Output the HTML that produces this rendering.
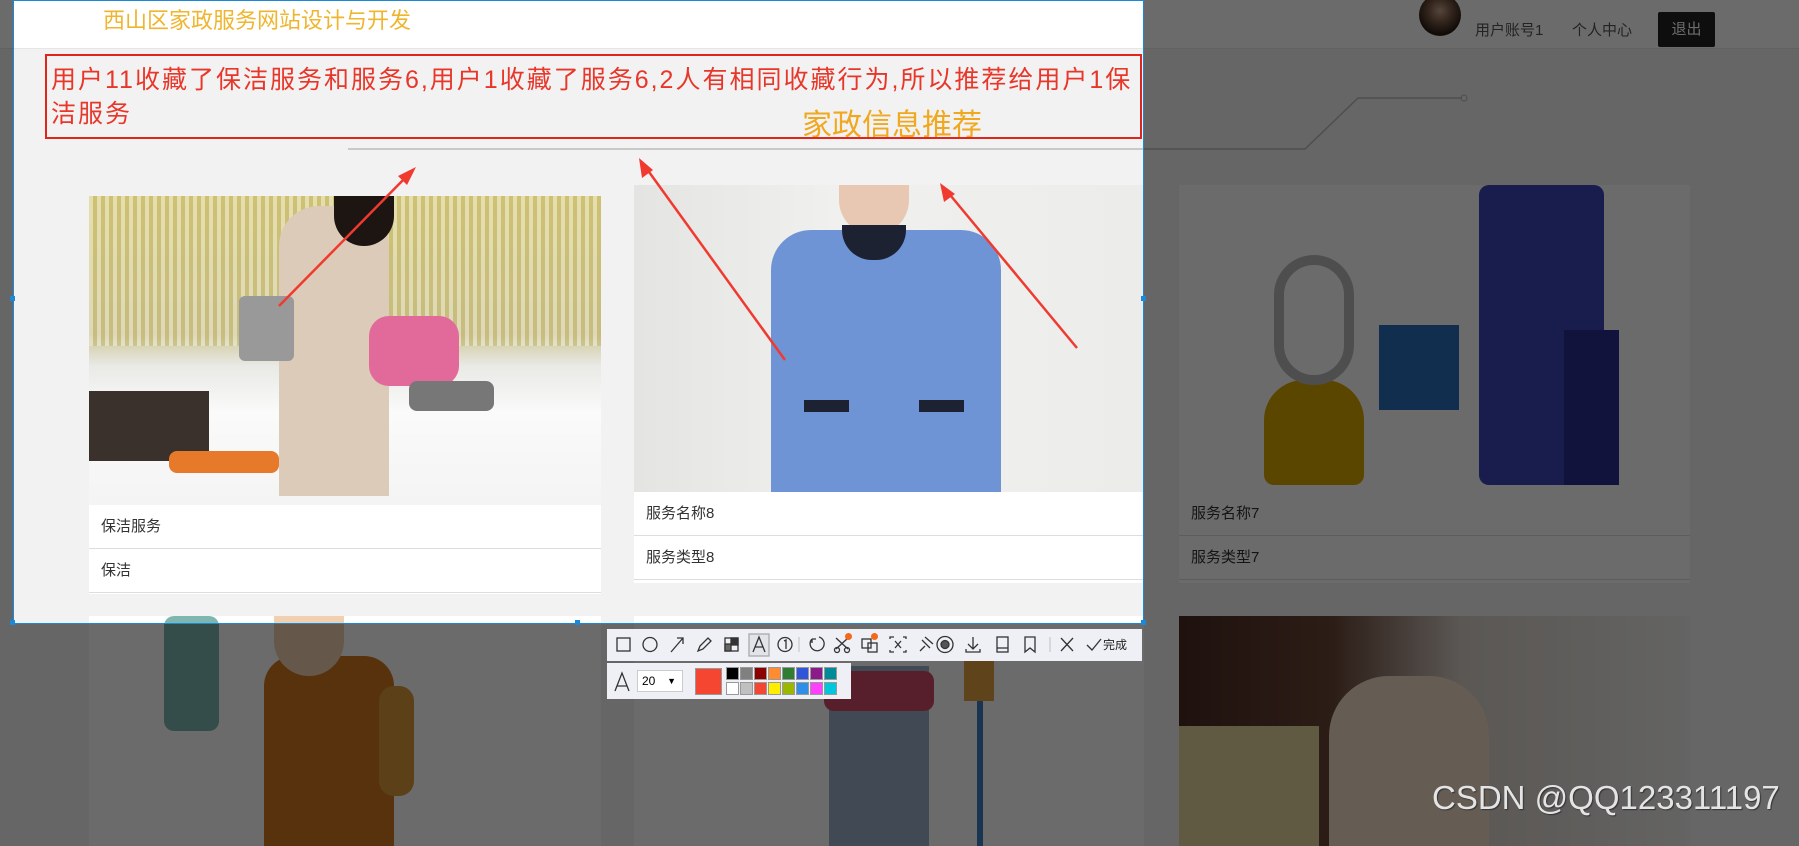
<!DOCTYPE html>
<html><head><meta charset="utf-8"><style>
*{margin:0;padding:0;box-sizing:border-box}
body{width:1799px;height:833px;overflow:hidden;background:#f2f2f2;font-family:"Liberation Sans","Noto Sans CJK SC",sans-serif;position:relative}
.abs{position:absolute}
.hdr{left:0;top:0;width:1799px;height:49px;background:#fff;border-bottom:1px solid #e6e6e6}
.card{position:absolute;background:#fff;overflow:hidden}
.row{height:44px;line-height:43px;padding-left:12px;font-size:15px;color:#333;border-bottom:1px solid #ddd;background:#fff}
.tb{position:absolute;background:#eef0f5;z-index:20}
.sw{position:absolute;width:13px;height:13px;border:1px solid #999}
</style></head><body>
<div class="abs hdr"></div>
<div class="abs" style="left:103px;top:3px;font-size:22px;color:#f0b52e">西山区家政服务网站设计与开发</div>
<div class="abs" style="left:1419px;top:-6px;width:42px;height:42px;border-radius:50%;background:radial-gradient(circle at 50% 40%,#c9a68c 0,#7a5a45 35%,#2b1d16 70%)"></div>
<div class="abs" style="left:1475px;top:19px;font-size:15px;color:#555">用户账号1</div>
<div class="abs" style="left:1572px;top:19px;font-size:15px;color:#555">个人中心</div>
<div class="abs" style="left:1658px;top:12px;width:57px;height:35px;background:#222;color:#fff;font-size:15px;line-height:35px;text-align:center;border-radius:2px">退出</div>
<svg class="abs" style="left:0;top:0" width="1799" height="833">
<polyline points="348,149 1305,149 1358,98 1462,98" fill="none" stroke="#bbb" stroke-width="1.5"/>
<circle cx="1464" cy="98" r="3" fill="none" stroke="#bbb"/>
</svg>
<div class="abs" style="left:802px;top:100px;font-size:30px;color:#f0a81e">家政信息推荐</div>
<div class="card" style="left:89px;top:196px;width:512px;height:398px">
 <div style="height:309px;position:relative;background:linear-gradient(#d9cf8a 0,#cfc99a 45%,#e9e9e6 55%,#fafafa 70%,#f4f4f4 100%)">
  <div class="abs" style="left:0;top:0;width:512px;height:150px;background:repeating-linear-gradient(90deg,rgba(255,255,255,.3) 0 4px,rgba(180,160,60,.3) 4px 8px)"></div>
  <div class="abs" style="left:0;top:195px;width:120px;height:70px;background:#3a302c"></div>
  <div class="abs" style="left:190px;top:10px;width:110px;height:290px;background:#dccbb8;border-radius:40px 40px 0 0"></div>
  <div class="abs" style="left:245px;top:0;width:60px;height:50px;background:#1c1512;border-radius:0 0 30px 30px"></div>
  <div class="abs" style="left:280px;top:120px;width:90px;height:70px;background:#e26a9a;border-radius:20px"></div>
  <div class="abs" style="left:320px;top:185px;width:85px;height:30px;background:#777;border-radius:8px"></div>
  <div class="abs" style="left:80px;top:255px;width:110px;height:22px;background:#e77a2a;border-radius:8px"></div>
  <div class="abs" style="left:150px;top:100px;width:55px;height:65px;background:#999;border-radius:6px"></div>
 </div>
 <div class="row">保洁服务</div><div class="row">保洁</div>
</div>
<div class="card" style="left:634px;top:185px;width:510px;height:398px">
 <div style="height:307px;position:relative;background:linear-gradient(90deg,#e4e4e2,#f0f0ee 40%,#ececea)">
  <div class="abs" style="left:137px;top:45px;width:230px;height:262px;background:#6f94d6;border-radius:40px 40px 0 0"></div>
  <div class="abs" style="left:205px;top:0;width:70px;height:50px;background:#e8c8b2;border-radius:0 0 35px 35px"></div>
  <div class="abs" style="left:208px;top:40px;width:64px;height:35px;background:#1d2233;border-radius:0 0 30px 30px"></div>
  <div class="abs" style="left:170px;top:215px;width:45px;height:12px;background:#1d2233"></div>
  <div class="abs" style="left:285px;top:215px;width:45px;height:12px;background:#1d2233"></div>
 </div>
 <div class="row">服务名称8</div><div class="row">服务类型8</div>
</div>
<div class="card" style="left:1179px;top:185px;width:511px;height:398px">
 <div style="height:307px;position:relative;background:#fff">
  <div class="abs" style="left:85px;top:195px;width:100px;height:105px;background:#d9a800;border-radius:40px 40px 10px 10px"></div>
  <div class="abs" style="left:95px;top:70px;width:80px;height:130px;border:10px solid #bbb;border-radius:40px"></div>
  <div class="abs" style="left:200px;top:140px;width:80px;height:85px;background:#2c6fba"></div>
  <div class="abs" style="left:300px;top:0;width:125px;height:300px;background:#3a45b8;border-radius:10px"></div>
  <div class="abs" style="left:385px;top:145px;width:55px;height:155px;background:#2a2f90"></div>
 </div>
 <div class="row">服务名称7</div><div class="row">服务类型7</div>
</div>
<div class="card" style="left:89px;top:616px;width:512px;height:230px">
 <div class="abs" style="left:175px;top:40px;width:130px;height:200px;background:#d2781e;border-radius:30px 30px 0 0"></div>
 <div class="abs" style="left:75px;top:0;width:55px;height:115px;background:#7fb7b0;border-radius:10px"></div>
 <div class="abs" style="left:185px;top:0;width:70px;height:60px;background:#f1d0b0;border-radius:0 0 35px 35px"></div>
 <div class="abs" style="left:290px;top:70px;width:35px;height:110px;background:#d99a3a;border-radius:15px"></div>
</div>
<div class="card" style="left:634px;top:616px;width:510px;height:230px">
 <div class="abs" style="left:195px;top:50px;width:100px;height:180px;background:#9bb0c8"></div>
 <div class="abs" style="left:190px;top:55px;width:110px;height:40px;background:#d04a6a;border-radius:10px"></div>
 <div class="abs" style="left:343px;top:50px;width:6px;height:180px;background:#3d7fc4"></div>
 <div class="abs" style="left:330px;top:45px;width:30px;height:40px;background:#e2a040"></div>
</div>
<div class="card" style="left:1179px;top:616px;width:511px;height:230px;background:linear-gradient(90deg,#4a2a22 0,#6a4536 30%,#d8d0c8 55%,#eeeeec 100%)">
 <div class="abs" style="left:150px;top:60px;width:160px;height:170px;background:#f0ddc6;border-radius:60px 60px 0 0"></div>
 <div class="abs" style="left:0;top:110px;width:140px;height:120px;background:#e8d7a0"></div>
</div>
<div class="abs" style="left:13px;top:0;width:1131px;height:624px;border:1px solid #1a8ad8;box-shadow:0 0 0 3000px rgba(0,0,0,.58);z-index:10"></div>
<div class="abs" style="left:10px;top:296px;width:5px;height:5px;background:#1a8ad8;z-index:11"></div>
<div class="abs" style="left:1141px;top:296px;width:5px;height:5px;background:#1a8ad8;z-index:11"></div>
<div class="abs" style="left:575px;top:620px;width:5px;height:5px;background:#1a8ad8;z-index:11"></div>
<div class="abs" style="left:10px;top:620px;width:5px;height:5px;background:#1a8ad8;z-index:11"></div>
<div class="abs" style="left:1141px;top:620px;width:5px;height:5px;background:#1a8ad8;z-index:11"></div>
<div class="abs" style="left:45px;top:54px;width:1097px;height:85px;border:2px solid #e0261c;z-index:12"></div>
<div class="abs" style="left:51px;top:63px;font-size:25px;line-height:34px;color:#e8372a;z-index:12;white-space:nowrap;letter-spacing:2px">用户11收藏了保洁服务和服务6,用户1收藏了服务6,2人有相同收藏行为,所以推荐给用户1保<br>洁服务</div>
<svg class="abs" style="left:0;top:0;z-index:12" width="1799" height="833">
<g stroke="#f03a30" stroke-width="2.5" fill="#f03a30">
<line x1="279" y1="306" x2="408" y2="175"/><polygon points="416,167 398,176 407,185" stroke="none"/>
<line x1="785" y1="360" x2="644" y2="165"/><polygon points="639,158 642,178 653,170" stroke="none"/>
<line x1="1077" y1="348" x2="946" y2="190"/><polygon points="940,183 944,202 955,194" stroke="none"/>
</g></svg>
<div class="tb" style="left:607px;top:629px;width:535px;height:32px">
<svg width="535" height="32" fill="none" stroke="#333" stroke-width="1.3">
<rect x="10" y="9" width="13" height="13"/>
<circle cx="43" cy="15.5" r="7"/>
<path d="M64 23 L76 9 M70 9 L76 9 L76 15"/>
<path d="M91 22 L93 17 L101 9 L104 12 L96 20 Z"/>
<rect x="118" y="9" width="13" height="13"/><rect x="124" y="9" width="7" height="7" fill="#333"/><rect x="118" y="15" width="6" height="7" fill="#666"/>
<rect x="142" y="5" width="20" height="22" fill="#e2e4ea" stroke="#aaa"/><path d="M146 23 L152 8 L158 23 M148 18 L156 18" stroke="#333"/>
<circle cx="178" cy="15.5" r="7"/><path d="M177 12 L179 11 L179 20"/>
<line x1="192" y1="8" x2="192" y2="23" stroke="#ccc"/>
<path d="M205 10 A7 7 0 1 0 212 8 M205 10 L205 14 M205 10 L209 10"/>
<path d="M229 9 L241 20 M241 9 L229 20"/><circle cx="230" cy="21" r="2.5"/><circle cx="240" cy="21" r="2.5"/>
<rect x="255" y="10" width="9" height="9"/><rect x="261" y="14" width="9" height="9"/>
<path d="M283 10 L283 8 L287 8 M296 8 L299 8 L299 10 M283 21 L283 23 L287 23 M296 23 L299 23 L299 21 M288 12 L294 19 M294 12 L288 19"/>
<path d="M313 22 L318 17 M315 11 L323 19 M318 8 L326 15"/>
<circle cx="338" cy="15.5" r="8"/><circle cx="338" cy="15.5" r="4" fill="#555"/>
<path d="M366 8 L366 19 M361 15 L366 20 L371 15 M359 20 L359 23 L373 23 L373 20"/>
<rect x="390" y="8" width="11" height="15"/><line x1="390" y1="19" x2="401" y2="19"/>
<path d="M418 8 L428 8 L428 23 L423 19 L418 23 Z"/>
<line x1="443" y1="8" x2="443" y2="23" stroke="#ccc"/>
<path d="M454 9 L466 22 M466 9 L454 22"/>
<path d="M480 16 L485 21 L494 10"/>
</svg>
<div class="abs" style="left:238px;top:4px;width:7px;height:7px;border-radius:50%;background:#f06a1e"></div>
<div class="abs" style="left:264px;top:4px;width:7px;height:7px;border-radius:50%;background:#f06a1e"></div>
<div class="abs" style="left:496px;top:7px;font-size:12px;color:#222">完成</div>
</div>
<div class="tb" style="left:607px;top:663px;width:244px;height:36px">
<svg class="abs" style="left:0;top:0" width="30" height="36" fill="none" stroke="#333" stroke-width="1.3"><path d="M8 28 L15 10 L22 28 M10 23 L20 23"/></svg>
<div class="abs" style="left:30px;top:7px;width:46px;height:22px;background:#fff;border:1px solid #ccc;font-size:12px;line-height:20px;padding-left:4px">20<span style="position:absolute;right:6px;top:0;font-size:9px">▼</span></div>
<div class="abs" style="left:88px;top:5px;width:27px;height:27px;background:#f44630;border:1px solid #999"></div>
<div class="sw" style="left:119px;top:4px;background:#000"></div><div class="sw" style="left:133px;top:4px;background:#808080"></div><div class="sw" style="left:147px;top:4px;background:#8b0000"></div><div class="sw" style="left:161px;top:4px;background:#ff8c32"></div><div class="sw" style="left:175px;top:4px;background:#2e7d32"></div><div class="sw" style="left:189px;top:4px;background:#3055d8"></div><div class="sw" style="left:203px;top:4px;background:#8b1a8b"></div><div class="sw" style="left:217px;top:4px;background:#008b99"></div>
<div class="sw" style="left:119px;top:19px;background:#fff"></div><div class="sw" style="left:133px;top:19px;background:#c0c0c0"></div><div class="sw" style="left:147px;top:19px;background:#f44630"></div><div class="sw" style="left:161px;top:19px;background:#ffee00"></div><div class="sw" style="left:175px;top:19px;background:#9ab800"></div><div class="sw" style="left:189px;top:19px;background:#2d8fe8"></div><div class="sw" style="left:203px;top:19px;background:#ff40ff"></div><div class="sw" style="left:217px;top:19px;background:#00c8dc"></div>
</div>
<div class="abs" style="left:1432px;top:779px;font-size:33px;color:#e4e4e4;text-shadow:1px 1px 1px #333;z-index:20;font-family:'Liberation Sans',sans-serif">CSDN @QQ123311197</div>
</body></html>
